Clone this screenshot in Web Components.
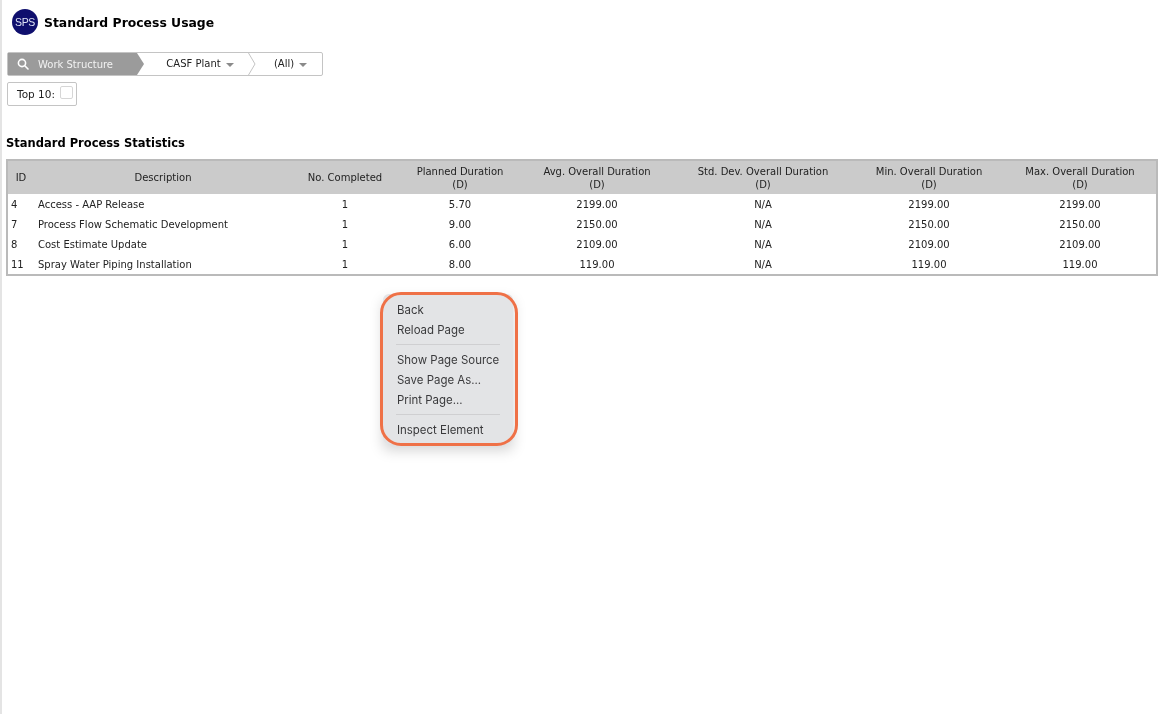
<!DOCTYPE html>
<html>
<head>
<meta charset="utf-8">
<title>Standard Process Usage</title>
<style>
html, body { margin: 0; height: 100%; background: #fff; }
body { font-family: "DejaVu Sans", Verdana, sans-serif; color: #222; }
</style>
</head>
<body>
<sps-page>
  <sps-header slot="header">Standard Process Usage</sps-header>
  <sps-filter-bar slot="filters"></sps-filter-bar>
  <sps-top-ten slot="filters"></sps-top-ten>
  <sps-stats-table slot="content" heading="Standard Process Statistics"></sps-stats-table>
  <sps-context-menu slot="overlay"></sps-context-menu>
</sps-page>

<script>
class SpsPage extends HTMLElement {
    constructor() {
        super();
        this.attachShadow({ mode: "open" }).innerHTML = `
<style>
:host { display: block; position: relative; height: 714px; box-sizing: border-box; border-left: 2px solid #e4e4e4; overflow: hidden; filter: blur(0.4px); }
.head { padding: 9px 0 0 10px; }
.filters { padding: 17px 0 0 5px; display: flex; flex-direction: column; align-items: flex-start; gap: 6px; }
.content { padding: 30px 12px 0 4px; }
</style>
<div class="head"><slot name="header"></slot></div>
<div class="filters"><slot name="filters"></slot></div>
<div class="content"><slot name="content"></slot></div>
<slot name="overlay"></slot>`;
    }
}

class SpsHeader extends HTMLElement {
    constructor() {
        super();
        this.attachShadow({ mode: "open" }).innerHTML = `
<style>
:host { display: flex; align-items: center; gap: 6px; height: 26px; }
.logo { width: 26px; height: 26px; border-radius: 50%; background: #0f0f6e; color: #dfe3f5; display: flex; align-items: center; justify-content: center; font: 10.5px "Liberation Sans", sans-serif; letter-spacing: -0.3px; }
h1 { margin: 0; font: bold 12.4px "DejaVu Sans", sans-serif; color: #000; }
</style>
<div class="logo">SPS</div>
<h1><slot></slot></h1>`;
    }
}

class SpsFilterBar extends HTMLElement {
    constructor() {
        super();
        this.attachShadow({ mode: "open" }).innerHTML = `
<style>
:host { display: flex; width: 316px; height: 24px; box-sizing: border-box; border: 1px solid #c4c4c4; border-radius: 2px; font-size: 10px; color: #222; position: relative; }
.search { width: 136px; background: #9b9b9b; color: #f2f2f2; display: flex; align-items: center; padding-left: 9px; gap: 9px; box-sizing: border-box; clip-path: polygon(0 0, 129px 0, 136px 50%, 129px 100%, 0 100%); }
.item { display: flex; align-items: center; justify-content: center; gap: 5px; padding-bottom: 1px; box-sizing: border-box; }
.casf { width: 104px; padding-left: 8px; }
.all { flex: 1; padding-left: 3px; }
.caret { width: 0; height: 0; border-left: 4px solid transparent; border-right: 4px solid transparent; border-top: 4px solid #8a8a8a; margin-top: 2px; }
svg { display: block; flex: none; }
.sep { flex: none; }
</style>
<div class="search">
  <svg width="12" height="12" viewBox="0 0 12 12" fill="none" stroke="#fff" stroke-width="1.6"><circle cx="5" cy="5" r="3.6"/><path d="M7.8 7.8 11 11" stroke-linecap="round"/></svg>
  <span>Work Structure</span>
</div>
<div class="item casf"><span>CASF Plant</span><i class="caret"></i></div>
<svg class="sep" width="8" height="22" viewBox="0 0 8 22" fill="none" stroke="#c4c4c4"><path d="M0.5 0 7 11 0.5 22"/></svg>
<div class="item all"><span>(All)</span><i class="caret"></i></div>`;
    }
}

class SpsTopTen extends HTMLElement {
    constructor() {
        super();
        this.attachShadow({ mode: "open" }).innerHTML = `
<style>
:host { display: flex; align-items: center; width: 70px; height: 24px; box-sizing: border-box; border: 1px solid #c4c4c4; border-radius: 2px; padding-left: 9px; gap: 5px; font-size: 10.5px; color: #222; }
.box { width: 11px; height: 11px; border: 1px solid #d6d6d6; border-radius: 2px; margin-top: -3px; background: #fff; }
</style>
<span>Top 10:</span><div class="box"></div>`;
    }
}

const statRows = [
    ["4", "Access - AAP Release", "1", "5.70", "2199.00", "N/A", "2199.00", "2199.00"],
    ["7", "Process Flow Schematic Development", "1", "9.00", "2150.00", "N/A", "2150.00", "2150.00"],
    ["8", "Cost Estimate Update", "1", "6.00", "2109.00", "N/A", "2109.00", "2109.00"],
    ["11", "Spray Water Piping Installation", "1", "8.00", "119.00", "N/A", "119.00", "119.00"]
];

const statHead = ["ID", "Description", "No. Completed", "Planned Duration<br>(D)", "Avg. Overall Duration<br>(D)", "Std. Dev. Overall Duration<br>(D)", "Min. Overall Duration<br>(D)", "Max. Overall Duration<br>(D)"];

class SpsStatsTable extends HTMLElement {
    constructor() {
        super();
        this.attachShadow({ mode: "open" });
    }

    connectedCallback() {
        const head = statHead.map(h => `<th>${h}</th>`).join("");
        const body = statRows.map(r => `<tr>${r.map(c => `<td>${c}</td>`).join("")}</tr>`).join("");
        this.shadowRoot.innerHTML = `
<style>
:host { display: block; }
h2 { margin: 0 0 9px; font: bold 11.5px/14px "DejaVu Sans", sans-serif; color: #000; }
.frame { border: 2px solid #bababa; }
table { width: 100%; table-layout: fixed; border-collapse: collapse; font-size: 10px; color: #222; }
th { height: 33px; padding: 0; background: #cbcbcb; font-weight: normal; line-height: 13px; text-align: center; }
td { height: 20px; padding: 0; text-align: center; }
td:first-child { text-align: left; padding-left: 3px; }
td:nth-child(2) { text-align: left; padding-left: 4px; }
</style>
<h2>${this.getAttribute("heading")}</h2>
<div class="frame">
<table>
  <colgroup><col style="width:26px"><col style="width:258px"><col style="width:106px"><col style="width:124px"><col style="width:150px"><col style="width:182px"><col style="width:150px"><col></colgroup>
  <thead><tr>${head}</tr></thead>
  <tbody>${body}</tbody>
</table>
</div>`;
    }
}

class SpsContextMenu extends HTMLElement {
    constructor() {
        super();
        this.attachShadow({ mode: "open" }).innerHTML = `
<style>
:host { position: absolute; left: 381px; top: 294px; width: 130px; box-sizing: border-box; padding: 6px 0 4px; background: #e3e4e6; border-radius: 6px; box-shadow: 0 6px 14px rgba(0,0,0,.18); font: 11.45px/20px "Inter", "Noto Sans", sans-serif; color: #3a3a3c; }
.ring { position: absolute; left: -3px; top: -2px; right: -5px; bottom: -2px; border: 3px solid #ef7147; border-radius: 21px; }
.row { padding-left: 14px; white-space: nowrap; }
hr { height: 1px; border: 0; background: #cfcfd1; margin: 4px 13px 5px; }
</style>
<div class="row">Back</div>
<div class="row">Reload Page</div>
<hr>
<div class="row">Show Page Source</div>
<div class="row">Save Page As...</div>
<div class="row">Print Page...</div>
<hr>
<div class="row">Inspect Element</div>
<div class="ring"></div>`;
    }
}

customElements.define("sps-page", SpsPage);
customElements.define("sps-header", SpsHeader);
customElements.define("sps-filter-bar", SpsFilterBar);
customElements.define("sps-top-ten", SpsTopTen);
customElements.define("sps-stats-table", SpsStatsTable);
customElements.define("sps-context-menu", SpsContextMenu);
</script>
</body>
</html>
